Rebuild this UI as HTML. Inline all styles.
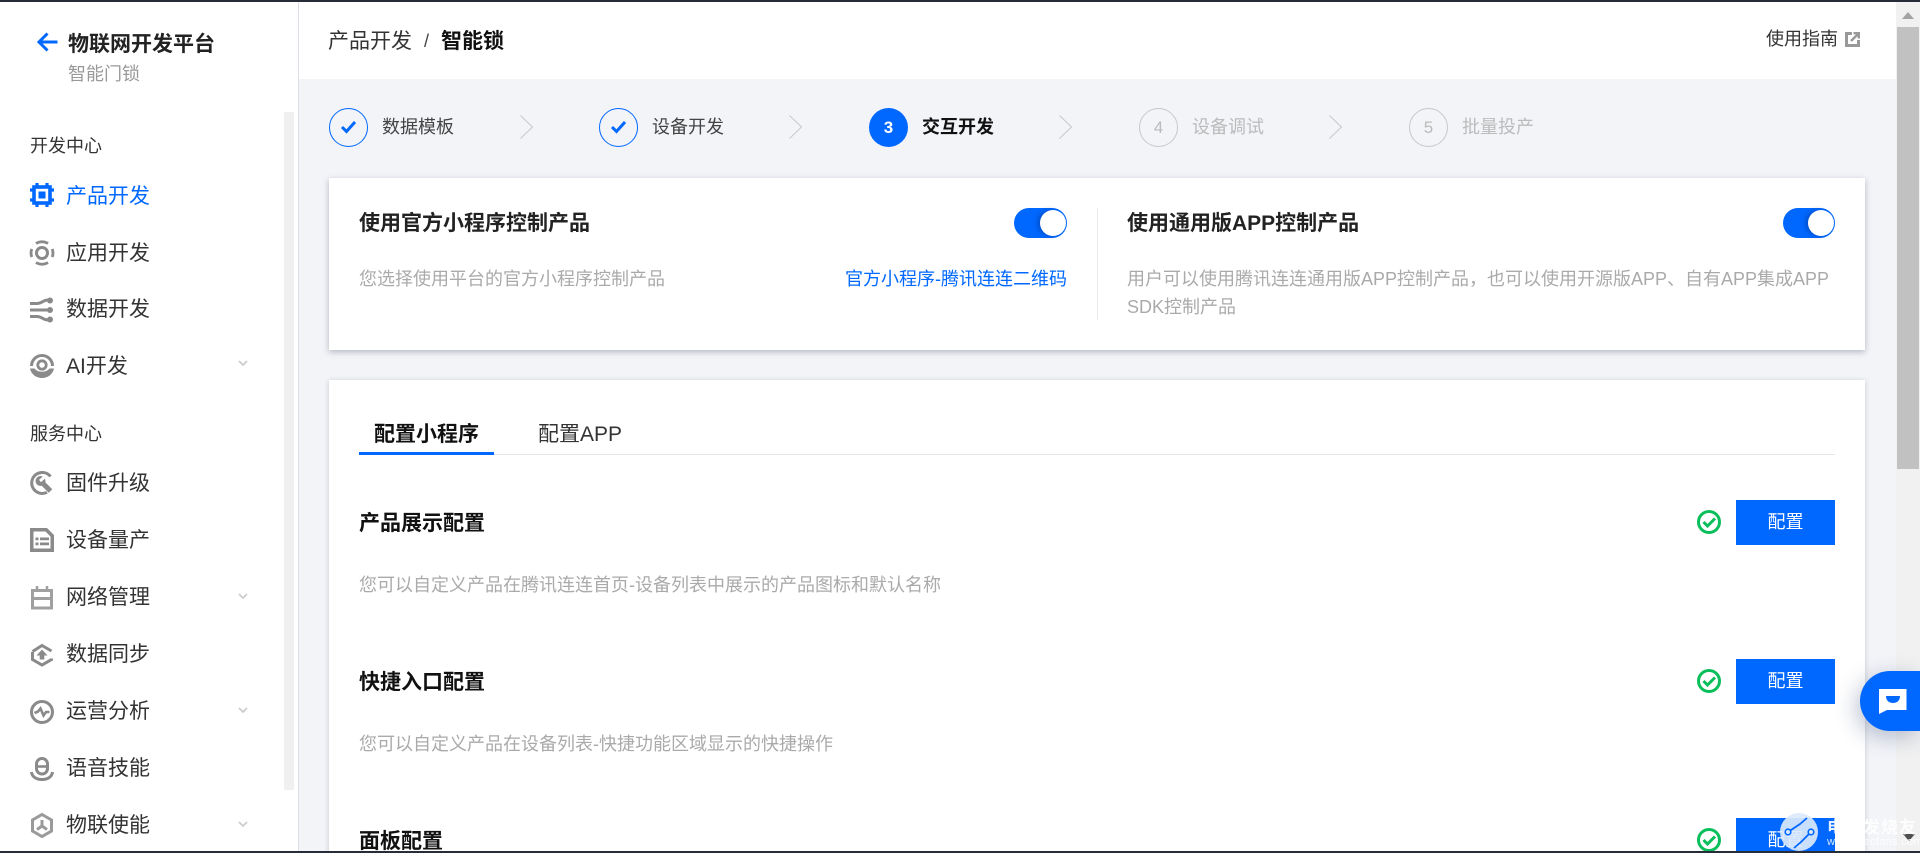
<!DOCTYPE html>
<html lang="zh"><head><meta charset="utf-8"><title>物联网开发平台</title>
<style>
html,body{margin:0;padding:0;width:1920px;height:853px;overflow:hidden;background:#f3f4f8}
body{position:relative;font-family:"Liberation Sans","Noto Sans CJK SC",sans-serif;color:#222}
.a{position:absolute;white-space:nowrap}
.t{position:absolute;white-space:nowrap;height:30px;line-height:30px}
svg{position:absolute;display:block;overflow:visible}
.m{font-size:21px;left:66px;color:#333}
.h{font-size:18px;left:30px;color:#333}
.ic{left:30px;width:24px;height:24px;color:#8a8a8a}
.chev{left:238px;width:10px;height:6px}
.lb{font-size:18px;color:#444}
.off{color:#bbb}
.cir{position:absolute;top:108px;width:37px;height:37px;border-radius:50%;border:1px solid #0068ff}
.cirg{position:absolute;top:108px;width:37px;height:37px;border-radius:50%;border:1px solid #c8c8c8;color:#bbb;font-size:17px;line-height:37px;text-align:center}
.sw{position:absolute;top:208px;width:53px;height:30px;border-radius:15px;background:#0068ff}
.sw:after{content:"";position:absolute;right:1px;top:2px;width:26px;height:26px;border-radius:50%;background:#fff;box-shadow:-3px 0 5px rgba(0,40,120,.35)}
.btn{position:absolute;left:1736px;width:99px;height:45px;background:#0068ff;color:#fff;font-size:18px;line-height:45px;text-align:center}
.sec{font-size:21px;font-weight:700;left:359px;color:#111}
.d{font-size:18px;color:#aaa}
.ok{left:1697px;width:24px;height:24px}
</style></head><body>

<div class="a" style="left:0;top:79px;width:1896px;height:774px;background:#f3f4f8"></div>
<!-- header -->
<div class="a" style="left:299px;top:2px;width:1597px;height:77px;background:#fff"></div>
<div class="t" style="left:328px;top:27px;font-size:21px;color:#333">产品开发</div>
<div class="t" style="left:424px;top:26px;font-size:18px;color:#444">/</div>
<div class="t" style="left:441px;top:27px;font-size:21px;font-weight:700;color:#111">智能锁</div>
<div class="t" style="left:1766px;top:24px;font-size:18px;color:#333">使用指南</div>
<svg style="left:1845px;top:32px;width:15px;height:15px" viewBox="0 0 15 15"><path d="M7 1.500H1.500v12h12V8" fill="none" stroke="#999" stroke-width="3"/><path d="M6 9l6.500-6.500M8.500 1.200h5.300v5.300" fill="none" stroke="#999" stroke-width="2.400"/></svg>

<!-- sidebar -->
<div class="a" style="left:0;top:2px;width:298px;height:849px;background:#fff"></div>
<div class="a" style="left:298px;top:2px;width:1px;height:849px;background:#dcdfe8"></div>
<div class="a" style="left:284px;top:112px;width:10px;height:678px;background:#f0f0f0"></div>
<svg style="left:37px;top:32px;width:21px;height:20px" viewBox="0 0 21 20"><path d="M20.500 10H2.500M10.500 1.500L2 10l8.500 8.500" fill="none" stroke="#0068ff" stroke-width="3"/></svg>
<div class="t" style="left:68px;top:30px;font-size:21px;font-weight:700;color:#222">物联网开发平台</div>
<div class="t" style="left:68px;top:59px;font-size:18px;color:#999">智能门锁</div>
<div class="t h" style="top:131px">开发中心</div>

<svg class="ic" style="top:183px;color:#0068ff" viewBox="0 0 24 24"><rect x="4" y="4" width="16" height="16" fill="none" stroke="currentColor" stroke-width="3.600"/><rect x="8.500" y="8.500" width="7" height="7" fill="currentColor"/><path d="M7 0v4M17 0v4M7 20v4M17 20v4M0 7h4M0 17h4M20 7h4M20 17h4" stroke="currentColor" stroke-width="3.200"/></svg>
<div class="t m" style="top:182px;color:#0068ff">产品开发</div>

<svg class="ic" style="top:241px" viewBox="0 0 24 24"><circle cx="12" cy="12" r="5.500" fill="none" stroke="currentColor" stroke-width="3"/><path d="M6 2.500a11 11 0 0 1 12 0M6 21.500a11 11 0 0 0 12 0M1.800 8a11 11 0 0 0 0 8M22.200 8a11 11 0 0 1 0 8" fill="none" stroke="currentColor" stroke-width="2.800"/></svg>
<div class="t m" style="top:239px">应用开发</div>

<svg class="ic" style="top:298px" viewBox="0 0 24 24"><path d="M0 5.500h7c5 0 6-3.500 11-3.500M0 12h18M0 18.500h7c5 0 6 3.500 11 3.500" fill="none" stroke="currentColor" stroke-width="3"/><circle cx="20" cy="2.500" r="3" fill="currentColor"/><circle cx="20" cy="12" r="3" fill="currentColor"/><circle cx="20" cy="21.500" r="3" fill="currentColor"/></svg>
<div class="t m" style="top:295px">数据开发</div>

<svg class="ic" style="top:354px" viewBox="0 0 24 24"><path d="M1.500 12a10.500 10.500 0 0 1 21 0" fill="none" stroke="currentColor" stroke-width="3"/><circle cx="12" cy="11" r="4.200" fill="none" stroke="currentColor" stroke-width="2.800"/><path d="M0 14.500h4.500c2 2.500 4.500 3.200 7.500 3.200s5.500-.7 7.500-3.200H24c-1 5.500-6 9.500-12 9.500S1 20 0 14.500z" fill="currentColor"/></svg>
<div class="t m" style="top:352px">AI开发</div>
<svg class="a chev" style="top:360px" viewBox="0 0 10 6"><path d="M1 1l4 4 4-4" fill="none" stroke="#ccc" stroke-width="1.800"/></svg>

<div class="t h" style="top:419px">服务中心</div>

<svg class="ic" style="top:471px" viewBox="0 0 24 24"><path d="M20.500 5.500A10.500 10.500 0 1 0 17 21.300" fill="none" stroke="currentColor" stroke-width="3"/><circle cx="10.500" cy="10" r="5" fill="currentColor"/><path d="M11 10.500L20.500 20" stroke="currentColor" stroke-width="5"/><path d="M14 6.500L10 10" stroke="#fff" stroke-width="3"/></svg>
<div class="t m" style="top:469px">固件升级</div>

<svg class="ic" style="top:528px" viewBox="0 0 24 24"><path fill-rule="evenodd" d="M0 0h17l7 7v17H0zM3.500 3.500v17h17V8.500l-5-5z" fill="currentColor"/><path d="M5.500 9.500h3v2.800h-3zM10 9.500h9v2.800h-9zM5.500 14.500h3v2.800h-3zM10 14.500h9v2.800h-9z" fill="currentColor"/></svg>
<div class="t m" style="top:526px">设备量产</div>

<svg class="ic" style="top:586px;color:#a0a0a0" viewBox="0 0 24 24"><rect x="2.500" y="4.500" width="19" height="17.500" fill="none" stroke="currentColor" stroke-width="3"/><path d="M2 12.500h20" stroke="currentColor" stroke-width="3"/><path d="M7 0v5M17 0v5" stroke="currentColor" stroke-width="2.500"/></svg>
<div class="t m" style="top:583px">网络管理</div>
<svg class="a chev" style="top:593px" viewBox="0 0 10 6"><path d="M1 1l4 4 4-4" fill="none" stroke="#ccc" stroke-width="1.800"/></svg>

<svg class="ic" style="top:643px" viewBox="0 0 24 24"><path d="M2.500 8.500L12 2.500l9.500 5.500M21.500 15.500v1L12 22 2.500 16.500V9" fill="none" stroke="currentColor" stroke-width="3"/><path d="M12 6.500l5.500 6h-3.200v4h-4.600v-4H6.500z" fill="currentColor"/></svg>
<div class="t m" style="top:640px">数据同步</div>

<svg class="ic" style="top:700px" viewBox="0 0 24 24"><circle cx="12" cy="12" r="10.500" fill="none" stroke="currentColor" stroke-width="3"/><path d="M4.500 13l3.500-1.500 2.500-3 3 7 2.500-3.500h3.500" fill="none" stroke="currentColor" stroke-width="2.600"/></svg>
<div class="t m" style="top:697px">运营分析</div>
<svg class="a chev" style="top:707px" viewBox="0 0 10 6"><path d="M1 1l4 4 4-4" fill="none" stroke="#ccc" stroke-width="1.800"/></svg>

<svg class="ic" style="top:757px" viewBox="0 0 24 24"><rect x="6.500" y="1.500" width="11" height="15.500" rx="5.500" fill="none" stroke="currentColor" stroke-width="3"/><path d="M7 9.500h10" stroke="currentColor" stroke-width="2.600"/><path d="M1.500 15c.5 5 5 7.500 10.500 7.500s10-2.500 10.500-7.500" fill="none" stroke="currentColor" stroke-width="3"/></svg>
<div class="t m" style="top:754px">语音技能</div>

<svg class="ic" style="top:813px;color:#9a9a9a" viewBox="0 0 24 24"><path d="M12 1.500l9.500 5.500v11L12 23.500 2.500 18V7z" fill="none" stroke="currentColor" stroke-width="3"/><path d="M12 7v6M12 13l-5 3.500M12 13l5 3.500" stroke="currentColor" stroke-width="3"/></svg>
<div class="t m" style="top:811px">物联使能</div>
<svg class="a chev" style="top:821px" viewBox="0 0 10 6"><path d="M1 1l4 4 4-4" fill="none" stroke="#ccc" stroke-width="1.800"/></svg>

<!-- steps -->
<div class="cir" style="left:329px"></div>
<svg style="left:340px;top:119px;width:17px;height:15px" viewBox="0 0 17 15"><path d="M2 8l4.500 4.500L15 3" fill="none" stroke="#0068ff" stroke-width="3"/></svg>
<div class="t lb" style="left:382px;top:112px">数据模板</div>
<svg style="left:520px;top:115px;width:13px;height:24px" viewBox="0 0 13 24"><path d="M.5.500L12.500 12 .5 23.500" fill="none" stroke="#c8c8c8"/></svg>
<div class="cir" style="left:599px"></div>
<svg style="left:610px;top:119px;width:17px;height:15px" viewBox="0 0 17 15"><path d="M2 8l4.500 4.500L15 3" fill="none" stroke="#0068ff" stroke-width="3"/></svg>
<div class="t lb" style="left:652px;top:112px">设备开发</div>
<svg style="left:789px;top:115px;width:13px;height:24px" viewBox="0 0 13 24"><path d="M.5.500L12.500 12 .5 23.500" fill="none" stroke="#c8c8c8"/></svg>
<div class="a" style="left:869px;top:108px;width:39px;height:39px;border-radius:50%;background:#0068ff;color:#fff;font-size:17px;font-weight:700;line-height:39px;text-align:center">3</div>
<div class="t" style="left:922px;top:112px;font-size:18px;font-weight:700;color:#111">交互开发</div>
<svg style="left:1059px;top:115px;width:13px;height:24px" viewBox="0 0 13 24"><path d="M.5.500L12.500 12 .5 23.500" fill="none" stroke="#c8c8c8"/></svg>
<div class="cirg" style="left:1139px">4</div>
<div class="t lb off" style="left:1192px;top:112px">设备调试</div>
<svg style="left:1329px;top:115px;width:13px;height:24px" viewBox="0 0 13 24"><path d="M.5.500L12.500 12 .5 23.500" fill="none" stroke="#c8c8c8"/></svg>
<div class="cirg" style="left:1409px">5</div>
<div class="t lb off" style="left:1462px;top:112px">批量投产</div>

<!-- card 1 -->
<div class="a" style="left:329px;top:178px;width:1536px;height:172px;background:#fff;box-shadow:0 2px 6px rgba(60,70,90,.35)"></div>
<div class="t" style="left:359px;top:209px;font-size:21px;font-weight:700;color:#222">使用官方小程序控制产品</div>
<div class="sw" style="left:1014px"></div>
<div class="t d" style="left:359px;top:264px">您选择使用平台的官方小程序控制产品</div>
<div class="t" style="left:845px;top:264px;font-size:18px;color:#0068ff">官方小程序-腾讯连连二维码</div>
<div class="a" style="left:1097px;top:208px;width:1px;height:112px;background:#ececec"></div>
<div class="t" style="left:1127px;top:209px;font-size:21px;font-weight:700;color:#222">使用通用版APP控制产品</div>
<div class="sw" style="left:1783px;width:52px"></div>
<div class="t d" style="left:1127px;top:264px">用户可以使用腾讯连连通用版APP控制产品，也可以使用开源版APP、自有APP集成APP</div>
<div class="t d" style="left:1127px;top:292px">SDK控制产品</div>

<!-- card 2 -->
<div class="a" style="left:329px;top:380px;width:1536px;height:473px;background:#fff;box-shadow:0 1px 5px rgba(60,70,90,.25)"></div>
<div class="t" style="left:374px;top:420px;font-size:21px;font-weight:700;color:#111">配置小程序</div>
<div class="t" style="left:538px;top:420px;font-size:21px;color:#333">配置APP</div>
<div class="a" style="left:359px;top:454px;width:1476px;height:1px;background:#e6e6e6"></div>
<div class="a" style="left:359px;top:452px;width:135px;height:3px;background:#0068ff"></div>

<div class="t sec" style="top:509px">产品展示配置</div>
<div class="t d" style="left:359px;top:570px">您可以自定义产品在腾讯连连首页-设备列表中展示的产品图标和默认名称</div>
<svg class="a ok" style="top:510px" viewBox="0 0 24 24"><circle cx="12" cy="12" r="10.500" fill="none" stroke="#0abf5b" stroke-width="3"/><path d="M6.500 12l4 4 7.500-7.500" fill="none" stroke="#0abf5b" stroke-width="3"/></svg>
<div class="btn" style="top:500px">配置</div>

<div class="t sec" style="top:668px">快捷入口配置</div>
<div class="t d" style="left:359px;top:729px">您可以自定义产品在设备列表-快捷功能区域显示的快捷操作</div>
<svg class="a ok" style="top:669px" viewBox="0 0 24 24"><circle cx="12" cy="12" r="10.500" fill="none" stroke="#0abf5b" stroke-width="3"/><path d="M6.500 12l4 4 7.500-7.500" fill="none" stroke="#0abf5b" stroke-width="3"/></svg>
<div class="btn" style="top:659px">配置</div>

<div class="t sec" style="top:827px">面板配置</div>
<svg class="a ok" style="top:828px" viewBox="0 0 24 24"><circle cx="12" cy="12" r="10.500" fill="none" stroke="#0abf5b" stroke-width="3"/><path d="M6.500 12l4 4 7.500-7.500" fill="none" stroke="#0abf5b" stroke-width="3"/></svg>
<div class="btn" style="top:818px">配置</div>

<!-- scrollbar -->
<div class="a" style="left:1896px;top:2px;width:24px;height:849px;background:#f1f1f1"></div>
<div class="a" style="left:1897px;top:27px;width:22px;height:442px;background:#c1c1c1"></div>
<svg style="left:1902px;top:12px;width:12px;height:7px" viewBox="0 0 12 7"><path d="M6 0l6 7H0z" fill="#a3a3a3"/></svg>
<svg style="left:1903px;top:834px;width:12px;height:7px" viewBox="0 0 12 7"><path d="M6 7L0 0h12z" fill="#505050"/></svg>

<!-- chat -->
<div class="a" style="left:1860px;top:671px;width:60px;height:60px;border-radius:30px 0 0 30px;background:#0068ff;box-shadow:-4px 6px 22px rgba(40,60,110,.3)"></div>
<svg style="left:1879px;top:689px;width:28px;height:26px" viewBox="0 0 28 26"><path d="M0 0h27.500v21H8L0 25z" fill="#fff"/><path d="M7 7h14c0 4.500-3 7-7 7s-7-2.500-7-7z" fill="#0068ff"/></svg>

<!-- watermark -->
<svg style="left:1780px;top:813px;width:38px;height:38px" viewBox="0 0 38 38"><circle cx="19" cy="19" r="19" fill="#dbe9fb" fill-opacity=".92"/><path d="M8 19L20 11l7-6M31 19L21 29l-7 6" fill="none" stroke="#0068ff" stroke-width="1.800"/><circle cx="8" cy="19" r="2.800" fill="#dbe9fb" stroke="#0068ff" stroke-width="1.600"/><circle cx="31" cy="19" r="2.800" fill="#dbe9fb" stroke="#0068ff" stroke-width="1.600"/></svg>
<div class="a" style="left:1827px;top:817px;font-size:17px;line-height:22px;font-weight:700;color:#fff;opacity:.9;letter-spacing:1px">电子发烧友</div>
<div class="a" style="left:1827px;top:836px;font-size:11px;line-height:12px;color:#fff;opacity:.85;letter-spacing:.3px">www.elecfans.com</div>

<!-- window edges -->
<div class="a" style="left:0;top:0;width:1920px;height:2px;background:#262c38"></div>
<div class="a" style="left:0;top:851px;width:1920px;height:2px;background:#262c38"></div>
</body></html>
